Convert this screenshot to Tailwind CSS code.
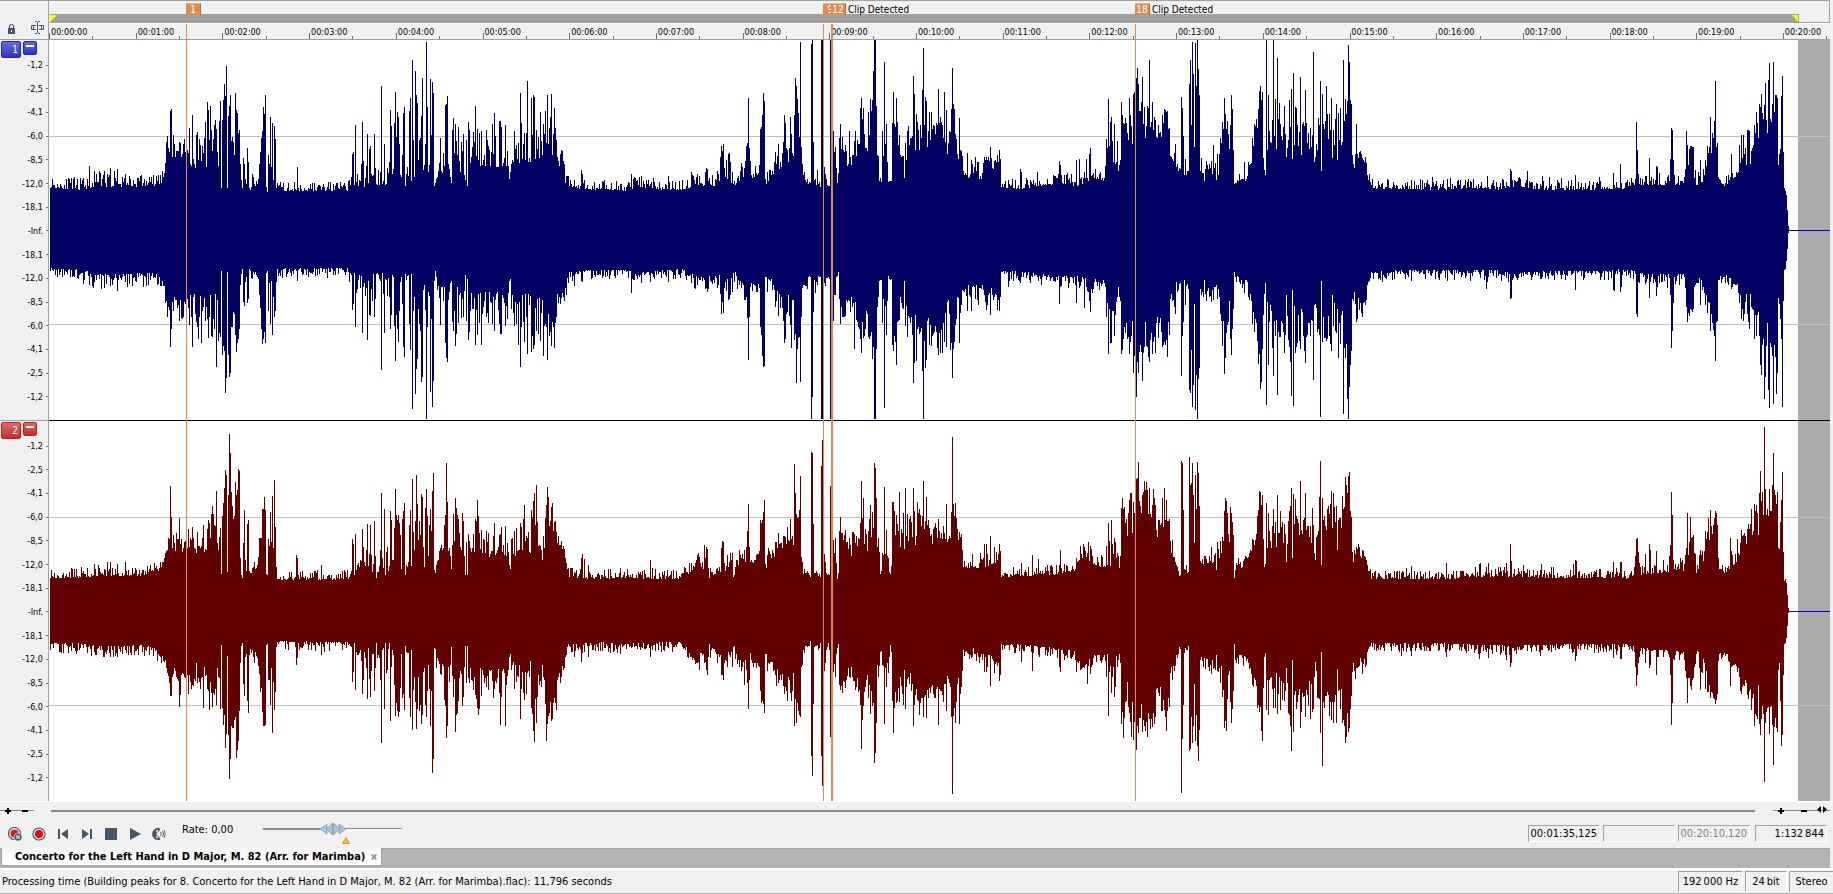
<!DOCTYPE html>
<html lang="en">
<head>
    <meta charset="UTF-8">
    <meta name="viewport" content="width=device-width, initial-scale=1.0">
    <title>Concerto for the Left Hand in D Major, M. 82 (Arr. for Marimba)</title>
    <script src="https://cdn.jsdelivr.net/npm/@tailwindcss/browser@4"></script>
</head>
<body class="h-screen min-h-[500px] flex flex-col overflow-hidden bg-[#f0f0f0] text-black text-[11px] leading-[14px] font-['DejaVu_Sans_Condensed','DejaVu_Sans',sans-serif]">
    <main class="flex-1 min-h-0 flex flex-col mr-[3px] border-t border-[#a0a0a0]">
        <!-- Markers and time ruler -->
        <header class="flex h-[39px] shrink-0 text-[9px]">
            <div class="w-[49px] shrink-0 border-r border-b border-[#a0a0a0] flex items-end gap-4 pl-2 pb-1">
                <button aria-label="Lock" class="w-[7px] h-[14px]">
                    <svg class="w-[7px] h-[14px]" viewBox="0 0 7 14"><path d="M1.5 8V5.5a2 2 0 0 1 4 0V8" fill="none" stroke="#465666" stroke-width="1.2"/><path fill="#465666" d="M0 7h7v6H0z"/><path fill="#f0f0f0" d="M3 9h1v2H3z"/></svg>
                </button>
                <button aria-label="Snap cursor" class="w-[13px] h-[15px]">
                    <svg class="w-[13px] h-[15px]" viewBox="0 0 13 15" fill="none" stroke="#465666"><path d="M4 1.500h1.500l1 1 1-1H9M4 13.500h1.500l1-1 1 1H9M6.500 2v11M5 5.500H.5v4H5M8 5.500h4.500v4H8M2.500 6v3M10.500 6v3"/></svg>
                </button>
            </div>
            <div class="flex-1 min-w-0 flex flex-col relative">
                <div class="h-[13px] shrink-0 border-r border-[#a0a0a0]"></div>
                <div class="h-[9px] shrink-0 flex border-r border-[#a0a0a0]">
                    <div class="w-[98.25%] ml-px bg-[#a0a0a0] flex justify-between">
                        <svg class="w-2 h-2" viewBox="0 0 8 8"><path fill="#ffff00" d="M0 1h7L0 8z"/></svg>
                        <svg class="w-2 h-2" viewBox="0 0 8 8"><path fill="#ffff00" d="M1 1h6v7z"/></svg>
                    </div>
                    <div class="flex-1 border-b border-[#a0a0a0]"></div>
                </div>
                <div class="flex-1 relative overflow-hidden border-t border-white border-b border-b-[#a0a0a0]">
                    <svg id="ticks" class="absolute inset-0 w-full h-full" viewBox="0 0 1781 15" preserveAspectRatio="none" shape-rendering="crispEdges" fill="#707070"></svg>
                    <div id="times" class="relative flex leading-[17px]"></div>
                </div>
            </div>
        </header>

        <!-- Channels -->
        <div class="flex-1 min-h-0 flex flex-col relative">
            <section class="flex-1 min-h-0 flex" aria-label="Channel 1">
                <div class="w-[49px] shrink-0 border-r border-[#a0a0a0] flex flex-col text-[9px]">
                    <div class="h-[19px] shrink-0 flex items-start gap-[2px] pl-px pt-px">
                        <button class="w-5 h-[17px] rounded-[2px] border border-[#2222b0] bg-linear-to-b from-[#6868dd] to-[#3030c4] text-white text-[10px] leading-[16px] text-right pr-[2px]">1</button>
                        <button aria-label="Minimize channel 1" class="w-[14px] h-[14px] rounded-[2px] border border-[#2222b0] bg-linear-to-b from-[#6868dd] to-[#3030c4] flex justify-center pt-[3px]"><span class="w-2 h-[2px] bg-white"></span></button>
                    </div>
                    <ul class="scale flex-1 flex flex-col justify-between pb-[17px]"></ul>
                </div>
                <svg id="wave-1" class="flex-1 min-w-0 h-full bg-white" viewBox="0 0 1781 380" preserveAspectRatio="none" shape-rendering="crispEdges"></svg>
            </section>
            <div class="flex h-px shrink-0"><div class="w-[49px] bg-[#a0a0a0]"></div><div class="flex-1 bg-black"></div></div>
            <section class="flex-1 min-h-0 flex" aria-label="Channel 2">
                <div class="w-[49px] shrink-0 border-r border-[#a0a0a0] flex flex-col text-[9px]">
                    <div class="h-[19px] shrink-0 flex items-start gap-[2px] pl-px pt-px">
                        <button class="w-5 h-[17px] rounded-[2px] border border-[#b02222] bg-linear-to-b from-[#e06868] to-[#c42c2c] text-white text-[10px] leading-[16px] text-right pr-[2px]">2</button>
                        <button aria-label="Minimize channel 2" class="w-[14px] h-[14px] rounded-[2px] border border-[#b02222] bg-linear-to-b from-[#e06868] to-[#c42c2c] flex justify-center pt-[3px]"><span class="w-2 h-[2px] bg-white"></span></button>
                    </div>
                    <ul class="scale flex-1 flex flex-col justify-between pb-[17px]"></ul>
                </div>
                <svg id="wave-2" class="flex-1 min-w-0 h-full bg-white" viewBox="0 0 1781 380" preserveAspectRatio="none" shape-rendering="crispEdges"></svg>
            </section>
            <!-- Marker flags and lines lie over the ruler and both channels -->
            <div id="markers" class="absolute left-[49px] right-0 -top-[38px] bottom-0 pointer-events-none text-[10px]"></div>
        </div>
    </main>

    <!-- Scroll and zoom -->
    <div class="h-[18px] shrink-0 border-t border-white flex items-start pt-1 pr-[3px]">
        <svg class="w-[34px] h-[9px] shrink-0" viewBox="0 0 34 9" shape-rendering="crispEdges"><path fill="#858885" d="M0 4h34v1H0z"/><path d="M5 4h6v2H5zM7 2h2v6H7zM22 4h6v2h-6z"/></svg>
        <div class="flex-1 h-[2px] bg-[#858885] mt-1 ml-[17px] mr-[18px]"></div>
        <svg class="w-[57px] h-[9px] shrink-0" viewBox="0 0 57 9"><path fill="#858885" d="M0 4h57v1H0z"/><path d="M5 4h6v2H5zM7 2h2v6H7zM28 4h6v2h-6zM48 0v7l-4-3.500zM50 0v7l4-3.500z"/></svg>
    </div>

    <!-- Transport -->
    <div class="h-[29px] shrink-0 flex items-center pl-2 pr-[6px]">
        <div class="flex items-center gap-[10px]">
            <button aria-label="Record paused"><svg class="block w-[14px] h-[14px]" viewBox="0 0 14 14"><circle cx="6.500" cy="6.500" r="6" fill="#f8f8f8" stroke="#465666" stroke-width="1.200"/><circle cx="6.500" cy="6.500" r="4" fill="#dd1818"/><circle cx="10" cy="10" r="4" fill="#465666" stroke="#f0f0f0" stroke-width=".6"/><path d="M9 8v4M11 8v4" stroke="#fff" stroke-width="1.100"/></svg></button>
            <button aria-label="Record"><svg class="block w-[14px] h-[14px]" viewBox="0 0 14 14"><circle cx="7" cy="7" r="6" fill="#f8f8f8" stroke="#465666" stroke-width="1.200"/><circle cx="7" cy="7" r="4.200" fill="#dd1010"/></svg></button>
            <button aria-label="Go to start"><svg class="block w-[14px] h-[14px]" viewBox="0 0 14 14" fill="#465666"><path d="M2 2h2v10H2zM12 2v10L5 7z"/></svg></button>
            <button aria-label="Go to end"><svg class="block w-[14px] h-[14px]" viewBox="0 0 14 14" fill="#465666"><path d="M10 2h2v10h-2zM2 2v10l7-5z"/></svg></button>
            <button aria-label="Stop"><svg class="block w-[14px] h-[14px]" viewBox="0 0 14 14" fill="#465666"><path d="M1 1h12v12H1z"/></svg></button>
            <button aria-label="Play"><svg class="block w-[14px] h-[14px]" viewBox="0 0 14 14" fill="#465666"><path d="M2 1v12l11-6z"/></svg></button>
            <button aria-label="Scrub"><svg class="block w-[14px] h-[14px]" viewBox="0 0 14 14"><path fill="#465666" d="M8.500 1.500A6 6 0 1 0 8.500 12.500L6.500 9A2 2 0 0 1 6.500 5z"/><circle cx="5" cy="4" r="1" fill="#f0f0f0"/><circle cx="5" cy="10" r="1" fill="#f0f0f0"/><path fill="none" stroke="#465666" stroke-width=".9" d="M8.500 5q1.500 2 0 4M10.500 4q2 3 0 6M12.200 3q2 4 0 8"/></svg></button>
        </div>
        <label for="rate" class="ml-4 mb-2 w-[81px]">Rate: 0,00</label>
        <div class="relative w-[139px] h-6">
            <svg class="block w-[139px] h-6" viewBox="0 0 139 24"><path fill="#858885" d="M0 6h57v2H0zM80 6h59v1H80z"/><path fill="#fff" d="M82 7h57v1H82z"/><g fill="#a9c3d8" stroke="#7c95a8" stroke-width=".7"><path d="M64 2v10l-7-5zM76 2v10l7-5z"/><path d="M63 7l7-6 7 6-7 6z"/></g><path d="M70 1v12" stroke="#6e8799" stroke-width=".8"/><path fill="#ffc800" stroke="#e09030" d="M83 15.500l3.500 6h-7z"/></svg>
            <input id="rate" type="range" min="-100" max="100" value="0" class="absolute inset-0 w-full h-full m-0 opacity-0">
        </div>
        <div class="ml-auto flex leading-[16px]">
            <input aria-label="Position" value="00:01:35,125" class="w-[72px] h-[17px] mr-[3px] pr-[2px] text-right bg-transparent border border-[#a0a0a0] border-r-white border-b-white">
            <input aria-label="Selection" value="" class="w-[72px] h-[17px] mr-[3px] bg-transparent border border-[#a0a0a0] border-r-white border-b-white">
            <input aria-label="Length" value="00:20:10,120" class="w-[72px] h-[17px] mr-[5px] pr-[2px] text-right text-[#808080] bg-transparent border border-[#a0a0a0] border-r-white border-b-white">
            <input aria-label="Zoom ratio" value="1:132&thinsp;844" class="w-[72px] h-[17px] pr-[2px] text-right bg-transparent border border-[#a0a0a0] border-r-white border-b-white">
        </div>
    </div>

    <!-- File tabs -->
    <nav class="h-5 shrink-0 mr-[3px] bg-[#b3b3b3] border-t border-[#a0a0a0] pl-px flex items-start">
        <div class="-mt-px h-[18px] w-[381px] bg-linear-to-b from-[#f4f4f4] to-white border-x border-b border-[#a0a0a0] flex items-center justify-between pl-[13px] pr-1">
            <a href="#" class="font-bold whitespace-nowrap">Concerto for the Left Hand in D Major, M. 82 (Arr. for Marimba)</a>
            <button aria-label="Close file"><svg class="block w-[6px] h-[6px]" viewBox="0 0 6 6"><path d="M.7.7l4.600 4.600M5.300.7L.7 5.300" stroke="#909090" stroke-width="1.800"/></svg></button>
        </div>
    </nav>

    <!-- Status bar -->
    <footer class="h-[26px] shrink-0 border-t-2 border-t-white border-b border-b-[#a8b0b4] flex items-center">
        <p class="flex-1 pl-[2px] whitespace-nowrap">Processing time (Building peaks for 8. Concerto for the Left Hand in D Major, M. 82 (Arr. for Marimba).flac): 11,796 seconds</p>
        <div class="flex gap-[2px] leading-[19px] text-center whitespace-nowrap">
            <span class="w-[65px] h-[21px] border border-[#a0a0a0] border-r-white border-b-white">192&thinsp;000 Hz</span>
            <span class="w-[42px] h-[21px] border border-[#a0a0a0] border-r-white border-b-white">24&thinsp;bit</span>
            <span class="w-[44px] h-[21px] border-t border-l border-[#a0a0a0]">Stereo</span>
        </div>
    </footer>

    <script>
        const WIDTH = 1781;
        const MINUTE = 86.7;
        const END = 1749;

        // Decibel scale
        const levels = ['-1,2', '-2,5', '-4,1', '-6,0', '-8,5', '-12,0', '-18,1'];
        const scale = [...levels, '-Inf.', ...[...levels].reverse()];
        document.querySelectorAll('.scale').forEach(list => {
            list.innerHTML = scale.map(t => `<li class="flex items-center justify-end gap-[3px] leading-[12px]">${t}<span class="w-[2px] h-px bg-[#707070]"></span></li>`).join('');
        });

        // Time ruler
        let ticks = '';
        let times = '';
        for (let m = 0; m <= 20; m++) {
            const x = Math.round(m * MINUTE);
            ticks += `<rect x="${x}" y="9" width="1" height="6"/><rect x="${Math.round((m + 0.5) * MINUTE)}" y="12" width="1" height="3"/>`;
            times += `<span class="shrink-0 pl-[2px]" style="width:${MINUTE / WIDTH * 100}%">00:${String(m).padStart(2, '0')}:00</span>`;
        }
        document.getElementById('ticks').innerHTML = ticks;
        document.getElementById('times').innerHTML = times;

        // Markers: position, line width, number, caption
        const markers = [[137, 1, '1', ''], [774, 1, '9', ''], [782, 2, '12', 'Clip Detected'], [1086, 1, '18', 'Clip Detected']];
        document.getElementById('markers').innerHTML = markers.map(([x, w, n, text]) => `
            <div class="absolute top-0 bottom-0 flex" style="left:${x / WIDTH * 100}%">
                <span class="absolute left-0 top-[22px] bottom-0 bg-[#dd8c50]" style="width:${w}px"></span>
                <span class="mt-px h-3 w-[15px] bg-[#dd8c50] border-t border-t-[#eeb48c] border-r border-r-[#b86830] text-white text-center leading-[12px]">${n}</span>
                <span class="mt-px pl-[2px] leading-[13px] whitespace-nowrap">${text}</span>
            </div>`).join('');

        // Peak blocks per channel. env: position, top, bottom, spread. peaks: position, top, bottom
        const blue = [
            { x: -9, step: 2.613, to: 551,
              env: '25,438,690,22 100,445,694,22 150,432,708,30 200,436,708,30 300,432,704,22 320,420,725,30 332,340,790,40 380,342,790,40 400,370,770,70 440,350,790,120 520,350,790,90 527,440,695,20 560,436,700,18 570,430,705,18 592,446,690,18 618,450,690,18 805,448,688,18 815,432,705,50 960,415,720,60 1030,420,710,30 1045,390,750,40 1075,390,750,60 1120,365,765,50 1225,370,770,50 1235,350,770,70 1345,330,800,60 1374,400,750,20 1378,438,698,18 1470,448,692,18',
              peaks: '129,378,735 168,393,743 184,384,738 202,387,752 223,402,725 262,408,708 335,325,800 341,213,922 344,207,866 351,312,770 364,306,842 375,312,832 390,264,855 398,225,920 403,372,762 411,276,862 416,297,830 432,246,842 437,186,838 440,210,893 442,300,832 448,270,887 453,297,838 456,255,866 461,267,980 464,337,780 468,243,880 471,183,890 474,444,692 477,240,944 479,180,917 482,132,933 484,168,1060 487,78,1013 490,444,695 492,228,944 495,198,1010 498,165,998 500,303,862 503,290,862 506,306,816 508,345,822 511,159,884 513,210,935 516,219,908 519,279,896 521,270,868 524,372,735 527,420,702 529,444,687 532,354,785 535,372,797 537,417,725 540,432,712 542,324,790 545,366,776 547,444,687 550,450,692 555,402,718 571,417,716 574,372,765 576,336,803 579,294,868 581,273,911 584,201,896 586,222,875 589,165,908 592,441,698 594,456,692 597,345,812 599,372,730 602,231,851 605,381,722 607,249,884 610,420,770 613,258,830 615,297,812 618,444,725 673,381,722 816,342,809 819,336,792 821,435,700 824,255,860 829,402,748 834,420,705 842,246,878 845,363,740 853,378,743 856,282,899 861,327,825 863,318,827 866,402,748 871,405,702 874,282,830 876,384,776 879,432,702 890,396,722 892,138,989 900,312,878 908,384,767 916,210,868 918,258,825 924,387,712 926,249,857 929,156,962 932,291,825 934,216,866 937,231,905 939,312,812 942,405,725 947,345,792 950,219,920 952,201,950 955,438,702 963,408,705 966,213,851 968,174,929 971,423,702 973,60,1106 976,300,812 978,411,770 981,93,1061 984,165,986 986,189,956 989,360,806 992,300,851 994,294,872 997,228,1025 999,114,1010 1002,390,750 1005,375,735 1007,312,809 1010,6,1136 1012,201,862 1015,396,755 1017,375,767 1020,117,1055 1023,285,838 1025,126,1100 1028,159,1022 1031,438,722 1033,429,692 1036,417,712 1044,369,773 1046,294,854 1049,393,740 1054,339,782 1059,195,908 1062,192,953 1065,168,965 1067,372,780 1070,387,755 1072,411,730 1075,429,722 1078,270,845 1080,234,872 1083,339,812 1086,252,917 1088,303,881 1093,261,848 1096,363,766 1099,396,758 1106,282,830 1109,405,752 1112,420,705 1114,300,842 1117,438,716 1119,246,899 1122,270,875 1130,321,806 1133,276,806 1138,198,914 1140,348,810 1143,267,884 1148,279,848 1153,273,914 1159,360,800 1167,270,830 1169,300,820 1172,318,850 1182,252,851 1187,219,872 1190,288,780 1201,243,851 1203,243,881 1206,261,881 1216,255,857 1222,333,836 1227,417,722 1230,396,718 1240,273,857 1250,309,914 1253,369,786 1255,159,980 1258,249,862 1264,312,845 1266,279,905 1271,279,830 1274,123,941 1276,366,762 1282,366,768 1284,174,935 1287,285,887 1289,165,926 1292,171,914 1295,357,803 1298,270,872 1303,291,881 1308,216,902 1311,303,818 1313,345,780 1316,252,947 1318,282,857 1321,213,851 1324,309,862 1326,165,959 1329,312,821 1332,264,887 1334,231,875 1337,162,917 1339,345,846 1342,282,860 1345,204,923 1347,264,848 1350,300,830 1353,351,762 1358,378,770 1360,342,792 1365,333,760 1368,363,770 1371,372,782 1374,429,745 1381,408,730 1397,420,738 1415,390,722 1418,402,725' },
            { x: 551, step: 2.613, to: 1151,
              env: '0,444,694,18 75,450,694,18 90,435,705,20 140,444,694,18 215,445,692,18 250,430,715,25 300,432,710,25 350,430,705,20 375,410,740,25 415,405,735,20 435,425,715,20 455,395,740,30 475,375,780,30 525,350,800,40 545,430,712,15 600,435,715,15 622,420,715,20 630,350,780,50 700,330,830,60 722,345,800,40 735,424,720,10 760,420,720,10 765,330,800,70 795,350,800,40 815,300,840,40 900,290,850,40 945,345,780,30 955,410,740,20 1000,410,740,25 1046,370,770,20 1050,440,698,18 1100,442,698,18 1200,425,715,22 1240,435,710,22 1290,415,730,25 1315,420,720,15 1325,350,790,30 1360,370,780,40 1370,290,850,50 1485,280,860,40 1495,360,775,20 1515,398,730,10 1568,395,740,10',
              peaks: '83,402,758 89,411,720 104,411,712 108,408,728 131,432,725 139,414,712 179,408,725 239,396,730 278,384,745 281,387,755 307,393,745 309,402,735 315,351,762 317,318,821 320,333,785 322,312,818 325,384,745 330,360,752 335,342,780 338,339,776 341,366,765 346,396,755 349,432,698 354,435,697 359,414,748 369,369,745 377,384,780 379,363,780 382,318,770 385,309,833 388,174,959 390,324,830 393,363,740 395,405,728 408,399,755 416,375,745 419,267,862 422,261,884 424,225,947 427,159,980 430,183,977 432,417,712 435,432,710 437,396,755 447,405,718 456,366,750 458,336,800 461,372,782 466,312,827 474,381,772 477,339,803 479,306,842 482,225,908 484,249,896 487,324,821 490,330,815 492,366,765 495,324,827 498,231,854 500,282,923 503,339,780 505,348,780 508,225,899 511,114,881 513,138,1028 516,177,926 519,219,893 521,291,890 524,6,1025 526,321,830 529,372,745 532,405,735 534,396,735 537,420,738 540,426,738 545,432,712 550,429,712 553,12,1136 555,0,1070 558,306,815 560,420,720 563,417,758 568,390,735 571,432,707 574,426,710 576,441,712 579,0,1137 582,0,1137 586,381,730 589,402,738 594,435,714 602,0,1137 605,0,1137 610,273,842 612,336,765 615,321,765 617,384,712 620,429,707 622,399,697 625,294,776 628,252,851 630,327,800 633,291,830 636,330,830 638,336,830 641,315,827 646,378,785 649,372,780 654,351,815 657,375,770 660,345,800 665,303,926 667,273,785 673,300,845 675,312,860 678,312,866 680,204,896 683,174,938 686,237,845 688,204,893 691,282,887 694,324,866 699,333,821 701,216,890 704,285,896 706,177,887 709,213,875 711,180,956 714,93,920 716,0,1137 719,0,1137 722,198,926 724,345,800 727,348,770 730,423,722 732,414,720 735,426,720 738,273,850 740,348,776 743,66,1103 745,312,797 748,252,884 751,366,782 753,372,780 755,426,708 761,423,718 764,249,914 767,156,932 769,252,887 772,261,905 774,174,974 777,246,845 780,315,842 782,285,840 785,345,770 790,348,803 793,348,806 795,414,722 798,309,857 800,360,797 803,273,890 806,258,827 811,294,848 816,288,884 819,108,1028 821,162,968 824,330,825 827,222,962 829,246,868 832,270,860 835,330,881 838,255,875 842,150,992 845,24,1136 848,255,902 850,171,983 853,183,959 855,321,842 858,273,835 861,216,914 863,300,854 866,216,917 868,267,887 871,255,881 874,258,875 879,249,875 882,255,923 884,147,944 887,249,880 890,231,938 892,246,870 895,255,938 897,294,848 900,156,905 903,306,820 905,210,920 908,342,785 911,309,780 916,276,929 919,207,908 921,84,1013 924,192,926 926,207,905 929,282,854 932,297,838 935,342,770 937,357,775 940,234,908 942,330,820 945,333,794 948,348,750 950,393,752 953,405,755 960,339,812 965,411,765 971,360,812 973,372,740 981,351,776 986,366,780 988,366,794 1002,369,750 1005,351,765 1007,360,785 1010,351,809 1012,360,795 1015,351,764 1020,321,824 1023,354,745 1031,363,770 1036,366,765 1038,345,809 1041,366,780 1044,330,812 1046,357,770 1049,441,696 1067,420,740 1099,387,728 1101,396,710 1143,396,712 1201,363,791 1203,376,740 1245,360,788 1253,357,745 1266,396,803 1271,357,740 1279,342,782 1282,324,815 1295,387,716 1318,414,730 1321,378,740 1323,297,830 1326,324,788 1329,177,941 1331,318,806 1334,246,908 1337,231,908 1339,303,812 1345,252,887 1352,303,770 1355,393,740 1358,375,770 1363,186,941 1365,225,929 1368,249,896 1371,252,860 1373,234,878 1376,249,850 1381,300,890 1384,174,941 1386,225,905 1389,258,887 1392,312,842 1395,162,998 1397,156,947 1400,114,950 1402,114,1070 1405,84,965 1407,132,998 1410,213,935 1413,213,914 1415,186,935 1418,111,1022 1420,252,938 1423,201,920 1428,258,917 1431,198,920 1433,204,950 1436,60,965 1439,261,899 1442,246,880 1444,186,941 1447,270,905 1449,231,890 1452,240,938 1455,291,850 1457,294,830 1460,255,893 1465,276,835 1470,225,920 1473,249,914 1476,207,905 1478,210,914 1481,216,900 1483,213,950 1486,267,845 1489,264,884 1491,348,776 1494,351,762 1499,363,780 1502,339,800 1504,312,821 1507,381,725 1520,171,1007 1522,204,887 1525,288,845 1528,405,720 1530,357,794 1533,405,738 1541,132,1049 1544,60,1058 1546,255,929 1549,6,1100 1551,102,1034 1554,321,792 1557,9,1109 1559,138,1004 1562,0,1136 1564,87,1016 1567,165,983' },
            { x: 1151, step: 2.477, to: 1740,
              env: '0,395,750,20 50,400,745,20 83,420,730,10 88,430,710,20 115,415,725,20 132,340,800,30 165,320,810,40 345,310,830,50 376,340,800,20 412,370,770,10 422,442,696,18 600,445,694,18 700,440,694,22 740,446,696,18 775,435,705,20 850,446,696,18 1000,444,696,18 1055,442,690,18 1080,432,700,18 1100,432,705,18 1200,430,706,22 1230,430,715,22 1250,415,730,22 1285,420,715,18 1300,435,705,18 1330,410,735,20 1345,370,780,20 1385,290,840,30 1430,260,880,30 1446,400,740,5 1455,500,640,2 1459,568,573,0',
              peaks: '3,354,765 8,399,770 11,423,720 15,363,782 23,372,770 28,363,785 33,315,780 36,384,740 41,420,735 44,342,776 48,342,770 51,294,822 53,309,842 55,246,917 58,267,842 60,174,1001 63,222,953 65,267,878 68,243,854 70,282,845 73,327,782 75,255,896 78,165,944 80,207,866 83,330,806 85,432,697 110,366,758 120,366,770 130,294,851 135,252,875 137,258,836 140,237,848 142,264,902 145,207,971 148,153,941 150,138,1046 153,180,1025 155,156,926 157,354,824 160,390,762 162,405,730 164,0,1094 167,330,785 169,165,974 172,273,845 174,306,794 177,309,812 180,240,923 182,0,1007 184,288,842 187,177,887 189,327,840 192,54,1064 194,237,875 197,189,890 199,252,890 202,288,842 207,261,875 209,198,938 212,282,884 214,351,765 217,324,827 219,300,899 222,180,920 224,261,965 226,147,1067 229,357,750 231,99,1097 234,315,797 236,201,938 239,204,920 241,255,910 246,276,902 249,111,926 251,345,806 256,246,887 259,258,932 261,150,968 264,249,890 266,309,884 269,279,850 271,327,850 274,264,887 276,321,840 279,285,842 281,36,1019 284,366,795 286,351,792 288,312,804 291,330,875 293,234,866 296,255,884 298,123,1130 301,393,722 304,162,905 306,252,830 308,267,893 311,243,893 313,138,902 316,222,896 318,297,827 321,222,887 323,270,911 325,174,932 328,354,765 330,270,857 333,315,788 335,237,872 338,192,878 340,360,806 343,219,953 345,300,850 348,204,911 350,315,824 355,60,1121 357,243,923 360,177,953 362,222,911 365,183,1076 368,15,1136 370,66,1040 373,180,974 375,192,932 378,345,776 380,372,782 383,384,756 387,252,845 389,342,838 392,354,773 395,336,809 397,333,788 400,342,820 402,354,830 405,360,788 410,351,794 412,369,780 415,405,735 418,420,725 452,428,725 464,417,700 524,420,722 547,417,700 577,411,700 612,417,722 620,414,700 710,444,746 712,408,725 769,387,776 772,393,773 811,393,705 848,408,712 866,411,700 895,414,718 930,405,749 989,411,698 1025,399,749 1027,435,752 1041,372,755 1044,429,740 1081,246,821 1083,330,830 1086,402,725 1103,408,732 1113,354,773 1131,378,767 1133,381,740 1139,399,730 1158,411,743 1166,357,765 1168,264,923 1171,270,872 1173,360,788 1176,405,712 1203,387,745 1205,273,800 1208,315,845 1210,375,818 1213,327,827 1215,318,806 1218,318,809 1220,321,815 1222,321,806 1225,414,740 1228,390,735 1240,360,794 1247,387,740 1252,360,794 1255,378,765 1257,318,818 1260,339,785 1262,321,790 1264,231,872 1267,339,821 1270,279,848 1272,294,869 1275,243,887 1277,123,962 1279,321,845 1282,309,842 1284,411,720 1317,342,748 1319,399,740 1334,396,760 1337,315,788 1339,369,765 1341,285,836 1344,354,806 1346,285,842 1348,342,821 1351,324,785 1354,375,762 1357,270,821 1359,270,845 1361,273,866 1364,372,762 1366,333,800 1369,324,806 1373,255,896 1376,279,824 1378,216,887 1381,249,824 1383,294,815 1386,192,887 1388,201,974 1391,162,1004 1393,219,914 1396,237,896 1398,195,1076 1401,129,1010 1403,240,917 1406,279,848 1408,120,1049 1411,69,1103 1413,237,908 1415,246,920 1418,192,947 1420,66,1091 1423,216,914 1426,165,950 1428,165,1061 1430,174,998 1433,375,773 1435,342,792 1438,327,836 1440,168,896 1443,108,1100 1445,336,782 1448,444,690 1450,453,686 1453,465,662 1455,510,627 1457,558,580' },
        ];
        const red = [
            { x: -9, step: 2.613, to: 551,
              env: '25,470,674,18 100,468,674,20 150,462,682,22 200,462,682,22 290,462,680,20 310,450,700,20 325,430,720,20 335,390,755,30 380,375,770,30 440,380,775,40 470,390,760,30 525,400,740,30 530,468,676,10 560,448,700,20 570,430,710,20 592,460,680,10 618,476,668,18 805,474,670,18 815,450,690,20 885,450,690,30 960,430,710,50 1030,440,700,30 1045,400,740,30 1080,395,745,40 1120,390,750,30 1225,400,755,30 1235,400,735,40 1280,380,760,40 1345,350,800,40 1374,430,710,10 1378,468,676,18 1470,474,670,18',
              peaks: '124,444,700 168,447,712 176,426,690 184,426,712 202,432,712 223,426,690 268,450,697 307,447,722 315,426,712 323,426,722 327,399,720 330,393,745 333,390,758 335,354,767 338,357,788 341,198,827 344,291,827 346,384,770 351,369,745 356,339,770 359,357,776 364,294,860 367,372,824 372,395,760 377,366,770 383,372,780 388,327,821 393,354,785 395,360,806 398,321,794 401,354,797 403,384,776 408,399,730 411,336,788 416,378,785 424,354,770 427,315,863 430,396,740 437,327,806 440,300,812 443,309,869 445,354,785 448,282,820 450,258,860 453,282,820 456,315,824 458,318,806 461,213,854 464,369,745 466,390,770 469,351,775 471,324,866 474,462,675 477,288,863 479,249,914 482,204,884 484,150,983 487,165,941 490,456,707 492,225,944 495,42,1076 498,99,1016 500,216,917 503,258,923 505,297,923 508,288,899 511,186,890 513,225,1013 516,210,989 519,147,962 521,153,872 524,414,728 527,465,678 529,474,668 532,369,791 534,270,827 537,420,712 540,453,702 542,312,842 545,300,878 548,453,705 571,411,738 574,354,762 576,354,815 579,354,803 581,267,875 584,267,917 586,231,917 589,270,914 592,462,675 594,465,672 597,357,780 599,378,780 602,276,854 605,366,744 607,228,938 610,384,786 613,180,869 615,321,815 618,441,680 671,405,734 673,414,715 735,435,705 816,357,785 819,372,755 821,465,668 824,342,809 829,435,705 842,327,821 845,381,780 850,438,715 853,390,745 856,312,836 861,402,776 863,315,830 866,405,752 874,303,812 876,408,743 879,474,668 887,438,715 890,390,780 892,219,968 894,414,690 900,267,866 902,465,668 905,396,758 908,381,750 913,438,670 916,273,902 918,300,740 926,324,794 929,207,887 932,285,850 934,300,872 937,285,890 939,309,875 942,345,803 944,447,702 947,297,833 950,273,821 952,249,869 955,465,678 963,426,698 966,315,833 968,270,890 971,438,690 973,177,929 976,336,809 978,390,770 981,303,845 984,165,926 986,252,866 989,360,770 992,303,872 994,345,854 997,222,911 999,231,884 1002,381,755 1007,264,854 1010,207,890 1012,288,812 1015,408,735 1018,315,806 1020,267,917 1023,333,812 1025,213,1058 1028,159,1016 1031,450,684 1033,459,688 1046,384,762 1049,375,765 1057,315,839 1059,285,857 1062,129,953 1065,246,917 1067,393,740 1072,408,735 1075,447,682 1078,375,767 1080,282,830 1083,363,776 1086,234,935 1088,264,884 1091,285,878 1093,297,842 1096,339,773 1104,279,857 1106,303,830 1109,408,740 1112,465,678 1114,366,788 1117,465,678 1119,342,773 1122,363,788 1132,342,809 1138,297,824 1140,303,836 1143,240,863 1145,288,884 1148,339,866 1153,330,827 1159,357,765 1167,333,800 1172,339,809 1174,411,750 1185,348,833 1187,309,806 1201,345,818 1203,342,914 1206,321,830 1216,318,917 1222,369,767 1227,435,712 1229,447,702 1240,333,806 1245,324,785 1250,390,770 1255,309,896 1258,321,806 1263,297,820 1266,255,839 1271,348,821 1279,396,770 1282,399,722 1284,270,863 1287,291,881 1289,243,932 1292,219,965 1295,315,836 1297,195,908 1300,306,830 1305,375,794 1311,390,800 1313,420,735 1318,384,780 1321,294,851 1324,255,962 1326,201,911 1329,231,887 1332,318,878 1334,303,845 1337,261,902 1339,249,896 1342,333,848 1345,306,833 1347,303,848 1350,336,869 1355,348,770 1358,375,758 1363,363,770 1368,378,750 1371,387,745 1374,414,712 1397,456,710 1415,414,725 1417,402,700 1423,417,695 1433,435,710' },
            { x: 551, step: 2.613, to: 1151,
              env: '0,474,670,18 50,468,676,18 140,474,670,18 205,474,670,18 240,455,695,18 285,440,710,15 290,465,684,15 305,455,695,15 350,440,700,20 380,420,725,20 415,430,725,20 450,415,730,20 470,380,765,20 525,370,790,20 535,466,680,10 600,465,676,10 622,440,690,10 630,365,770,25 700,375,790,40 725,390,760,20 735,455,690,10 760,460,690,10 765,340,800,40 800,375,780,50 820,330,820,40 900,350,800,30 945,360,780,20 952,440,696,15 1000,440,705,20 1046,420,720,20 1050,468,676,12 1100,466,678,18 1200,458,690,18 1240,448,696,15 1255,405,735,20 1290,430,710,20 1315,440,705,20 1360,430,715,20 1368,300,850,30 1450,285,870,30 1490,330,820,20 1500,420,735,10 1515,465,684,8 1568,450,690,10',
              peaks: '131,420,710 136,444,690 223,444,690 233,429,700 239,429,712 250,429,732 252,420,730 255,405,728 257,399,725 260,411,750 268,426,705 273,375,730 276,414,725 278,381,750 281,387,765 283,444,710 286,474,673 307,444,730 312,441,712 317,384,765 320,363,765 322,366,780 325,429,730 333,405,740 341,399,712 346,399,742 349,471,680 351,465,678 364,390,742 369,414,752 377,390,794 382,381,750 385,333,788 388,252,866 390,381,780 393,426,698 405,420,730 411,402,730 416,393,740 419,300,812 422,309,848 424,300,842 427,276,851 430,240,878 432,432,702 435,444,702 437,405,752 440,384,730 456,411,750 458,366,765 461,366,797 466,339,790 471,369,765 474,369,780 479,348,797 482,348,821 484,351,800 487,372,812 490,321,842 495,363,780 498,297,818 500,357,842 503,348,812 506,375,760 508,132,917 511,219,836 513,282,908 516,294,848 519,291,872 521,270,884 524,168,890 526,411,740 529,426,735 532,462,690 542,453,680 550,471,662 552,96,1007 555,99,1067 558,312,851 560,459,680 576,471,668 579,138,1007 582,60,1097 586,402,752 589,426,728 592,459,690 597,462,670 600,465,690 602,198,950 605,198,950 610,360,755 612,399,732 615,354,770 617,429,702 620,477,685 622,459,672 625,333,794 628,291,809 630,339,797 633,339,818 638,345,785 641,330,803 644,366,780 649,387,745 654,375,773 657,408,742 662,336,782 665,342,782 670,348,800 675,354,815 680,309,854 683,183,986 686,294,899 688,234,857 691,372,815 694,327,800 699,393,765 701,333,833 704,297,794 706,255,881 709,351,812 711,276,857 714,324,848 717,129,1028 719,144,998 722,234,908 724,381,735 727,354,770 730,396,738 732,462,695 738,399,735 740,405,738 743,201,911 745,402,744 748,330,800 751,408,730 753,414,758 757,456,712 759,462,675 764,246,842 766,246,938 769,273,863 772,345,815 774,285,848 777,312,842 780,333,803 782,216,845 785,381,770 787,327,797 793,279,854 795,387,750 798,204,866 800,348,800 803,282,776 806,363,770 808,297,791 811,288,760 816,351,791 819,204,917 821,273,854 824,375,824 827,348,806 829,246,839 832,279,842 835,267,884 837,285,848 840,318,833 842,288,833 845,183,890 848,327,830 850,303,824 853,231,893 855,315,809 858,300,833 863,348,820 868,372,794 874,321,833 876,309,833 879,324,806 882,354,800 884,297,914 887,333,806 892,339,812 897,318,845 900,339,791 905,252,872 908,366,767 911,357,776 916,354,800 918,276,890 921,51,1121 924,252,887 926,288,863 929,249,908 932,294,845 934,327,791 937,360,773 940,336,911 942,351,821 945,342,800 948,390,752 950,441,690 968,426,705 973,402,710 976,441,685 994,399,710 1005,372,755 1010,372,755 1012,402,742 1020,348,797 1031,381,758 1041,402,730 1044,372,782 1046,393,765 1049,471,672 1080,441,680 1101,429,725 1131,405,752 1146,417,706 1201,435,740 1203,390,755 1213,432,720 1245,414,755 1256,378,750 1263,372,740 1266,381,745 1273,399,791 1276,366,738 1282,378,762 1285,387,740 1310,405,728 1313,411,720 1323,378,770 1329,309,887 1332,363,755 1337,300,818 1339,372,770 1342,402,740 1345,354,830 1347,366,800 1352,399,740 1358,444,702 1363,264,911 1365,234,875 1368,267,953 1371,261,893 1373,309,845 1376,297,842 1379,348,785 1381,279,860 1384,240,878 1386,219,905 1389,219,950 1392,339,845 1395,246,959 1397,279,905 1402,177,989 1405,174,917 1407,126,938 1410,243,893 1413,258,893 1415,279,851 1418,225,935 1420,216,899 1423,183,917 1425,210,932 1428,186,905 1431,210,950 1433,282,878 1436,204,896 1438,282,926 1441,291,896 1444,255,920 1446,207,878 1449,234,911 1452,255,890 1455,330,806 1457,351,803 1460,300,820 1462,300,827 1465,315,800 1468,309,872 1470,234,872 1473,321,839 1476,204,869 1478,300,890 1481,240,932 1483,303,872 1486,303,833 1489,297,860 1491,363,758 1494,399,740 1499,411,738 1501,411,752 1507,435,705 1515,468,680 1519,123,1118 1522,129,956 1525,270,854 1528,447,700 1533,435,690 1538,456,678 1541,111,992 1543,195,986 1546,189,890 1549,129,968 1551,225,917 1554,369,791 1557,165,962 1559,267,884 1562,126,977 1564,159,1022 1567,258,929' },
            { x: 1151, step: 2.477, to: 1740,
              env: '0,430,715,20 40,420,730,20 55,400,745,20 83,440,705,10 88,450,705,18 115,430,715,18 132,370,780,20 165,350,780,30 345,330,810,30 376,380,760,20 412,430,710,10 422,474,672,16 600,474,674,16 700,466,678,18 770,465,680,18 900,472,676,16 1000,470,676,16 1055,472,674,16 1080,460,685,16 1100,460,688,16 1200,448,700,20 1230,455,690,20 1250,420,730,20 1285,450,705,18 1300,455,700,18 1330,420,730,20 1345,370,780,20 1385,310,840,30 1430,290,860,30 1446,430,730,5 1455,520,620,2 1459,571,576,0',
              peaks: '6,417,722 13,408,748 23,408,752 28,381,762 36,405,745 41,450,705 43,366,752 51,363,790 55,351,830 58,363,809 60,273,923 63,234,902 65,243,932 68,279,836 70,342,765 73,366,752 75,261,845 78,279,908 80,306,866 83,345,812 85,474,672 96,414,732 125,390,745 130,357,794 132,360,800 137,360,780 140,342,797 142,288,863 145,270,854 148,213,875 150,216,860 152,255,932 155,225,962 157,357,803 160,441,712 162,432,698 164,249,869 167,384,780 169,279,884 172,333,779 174,363,773 177,384,770 180,318,806 182,267,863 184,339,803 187,306,863 189,381,760 192,225,881 194,339,821 197,339,770 199,273,869 202,321,782 204,306,839 207,369,788 209,312,842 212,342,812 214,426,744 217,372,788 219,303,878 222,273,884 224,258,917 226,204,992 229,414,720 231,222,935 234,312,824 236,237,812 239,288,866 241,297,845 244,309,824 249,183,923 251,330,875 256,300,830 259,294,827 261,219,890 264,330,809 266,318,824 269,318,857 271,351,782 274,318,896 276,369,791 279,264,875 281,315,866 284,399,770 286,420,725 288,351,752 291,345,833 294,333,833 296,231,836 298,123,938 301,435,696 304,234,1037 306,300,845 308,288,863 311,318,827 313,330,827 316,267,815 318,258,824 321,282,887 323,252,845 325,213,899 328,324,845 330,219,908 333,261,845 335,306,824 338,258,908 340,390,746 343,300,812 345,294,809 348,294,866 350,324,806 353,228,908 355,267,899 358,261,917 360,171,968 363,195,950 365,219,878 368,168,935 370,156,923 373,273,866 375,291,827 378,396,755 380,426,728 385,402,776 390,387,745 392,372,740 395,381,738 397,408,715 402,390,762 405,393,732 410,411,740 412,420,735 415,435,695 418,453,688 499,459,708 511,444,695 524,438,708 611,429,712 645,453,680 683,441,690 693,432,717 695,429,700 710,441,697 714,429,715 760,429,720 768,372,740 771,423,728 789,444,690 801,435,685 843,450,707 846,432,690 870,441,695 876,441,685 925,432,697 930,420,722 932,423,708 978,453,698 989,447,680 1025,426,715 1031,444,705 1041,426,718 1043,426,718 1078,408,740 1081,357,797 1083,354,765 1086,396,730 1088,429,712 1103,402,728 1113,372,745 1116,390,735 1131,393,765 1148,420,710 1163,408,712 1166,375,765 1168,216,914 1171,285,848 1173,420,717 1190,414,705 1203,405,752 1205,384,773 1208,279,848 1210,405,773 1213,366,773 1215,291,797 1218,354,809 1220,351,779 1222,345,773 1225,399,740 1228,402,732 1237,405,743 1240,390,809 1242,405,755 1245,393,758 1252,333,806 1255,357,752 1257,336,815 1260,294,815 1262,360,794 1264,270,833 1267,318,815 1270,342,820 1272,315,833 1275,294,836 1277,273,851 1279,279,839 1282,315,821 1285,414,722 1314,354,797 1316,393,740 1319,405,738 1331,357,755 1333,399,745 1339,369,812 1341,330,821 1344,348,800 1346,345,794 1349,339,797 1351,348,780 1354,372,788 1357,327,824 1359,312,836 1362,327,812 1364,312,806 1366,267,869 1368,345,833 1373,252,917 1376,273,881 1378,255,887 1381,279,896 1383,345,794 1386,219,911 1388,153,944 1391,243,896 1393,216,857 1396,285,881 1398,21,1085 1401,207,908 1403,285,875 1406,267,863 1408,288,860 1410,207,941 1413,273,860 1415,273,857 1418,195,914 1420,99,1034 1423,210,920 1425,225,893 1428,252,923 1430,216,935 1433,384,750 1435,387,728 1438,306,842 1440,240,977 1443,156,944 1445,396,764 1448,483,673 1450,477,668 1453,489,654 1455,525,617 1457,564,580' },
        ];

        const parse = s => s.split(' ').map(p => p.split(',').map(Number));

        function drawWave(id, blocks, color, offset, seed) {
            const rand = () => (seed = (seed * 16807) % 2147483647) / 2147483647;
            const cols = [];
            blocks.forEach(block => {
                const env = parse(block.env);
                let i = 0;
                for (let x = Math.max(1, block.x); x < block.to; x++) {
                    const pos = (x - block.x) * block.step;
                    while (i < env.length - 2 && env[i + 1][0] < pos) i++;
                    const [a, b] = [env[i], env[i + 1]];
                    const t = Math.max(0, Math.min(1, (pos - a[0]) / (b[0] - a[0])));
                    const [top, bottom, spread] = [1, 2, 3].map(k => a[k] + (b[k] - a[k]) * t);
                    cols[x] = [top + spread / 4 - rand() ** 2 * spread * 1.7, bottom - spread / 4 + rand() ** 2 * spread * 1.7];
                }
                parse(block.peaks).forEach(([pos, top, bottom]) => {
                    cols[block.x + Math.floor(pos / block.step)] = [top, bottom];
                });
            });
            const y = v => Math.max(0, Math.round((v - offset) / 3));
            let d = '';
            cols.forEach(([top, bottom], x) => { d += `M${x} ${y(top)}h1V${y(bottom)}h-1z`; });
            document.getElementById(id).innerHTML = `
                <rect x="${END}" width="${WIDTH - END}" height="380" fill="#ababab"/>
                <path d="M0 96h${WIDTH}v1H0zM0 284h${WIDTH}v1H0z" fill="#c0c0c0"/>
                <path d="${d}M1 190H${END}v1H1z" fill="${color}"/>
                <rect x="${END}" y="190" width="${WIDTH - END}" height="1" fill="#0000e0"/>`;
        }
        drawWave('wave-1', blue, '#000062', 0, 11);
        drawWave('wave-2', red, '#620000', 3, 29);
    </script>
</body>
</html>
